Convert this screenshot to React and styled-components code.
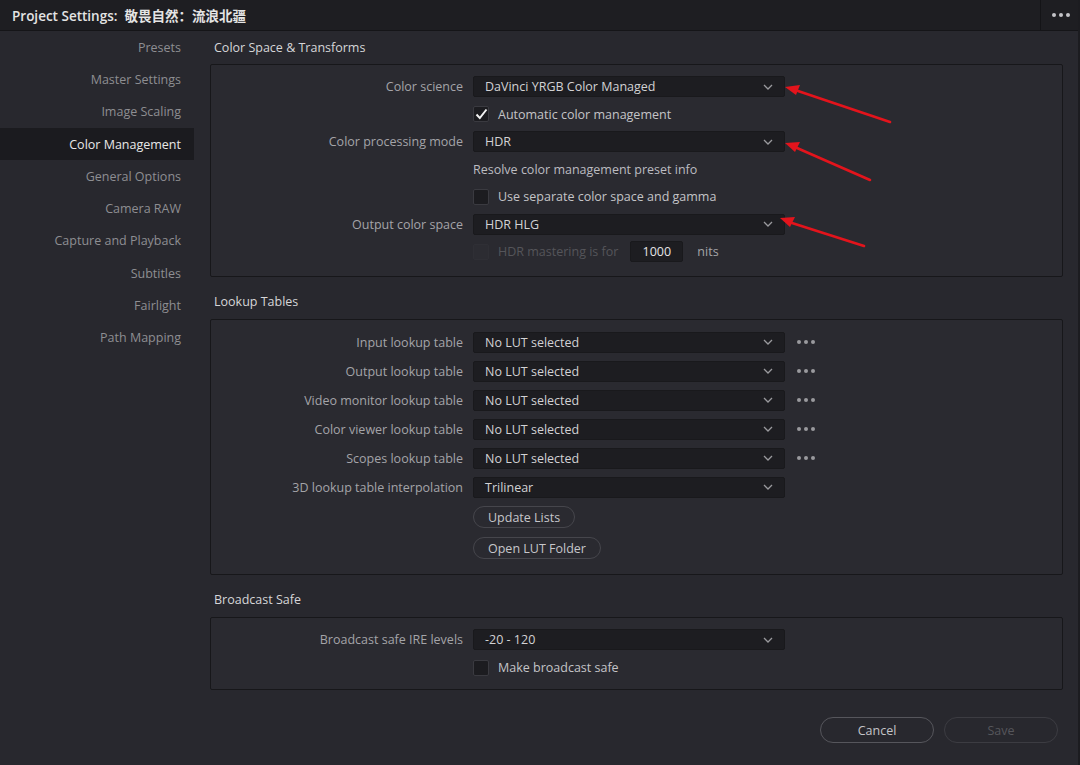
import React from 'react';
import styled, { createGlobalStyle } from 'styled-components';

const GlobalStyle = createGlobalStyle`
  html, body {
    margin: 0;
    padding: 0;
    background: #28282e;
  }
  * {
    box-sizing: border-box;
  }
`;

const sidebarItems = [
  'Presets',
  'Master Settings',
  'Image Scaling',
  'Color Management',
  'General Options',
  'Camera RAW',
  'Capture and Playback',
  'Subtitles',
  'Fairlight',
  'Path Mapping',
];

const lutRows = [
  'Input lookup table',
  'Output lookup table',
  'Video monitor lookup table',
  'Color viewer lookup table',
  'Scopes lookup table',
];

const Chevron = () => (
  <svg width="10" height="6" viewBox="0 0 10 6">
    <path d="M1 1 L5 5 L9 1" fill="none" stroke="#9a9a9e" strokeWidth="1.3" />
  </svg>
);

const Dropdown = ({ value }) => (
  <Select>
    <span>{value}</span>
    <Chevron />
  </Select>
);

const Check = ({ checked, disabled, children }) => (
  <CheckRow $disabled={disabled}>
    <Box $disabled={disabled}>
      {checked && (
        <svg width="13" height="12" viewBox="0 0 13 12">
          <path d="M1.5 6.5 L4.8 10 L11.5 1.5" fill="none" stroke="#f2f2f2" strokeWidth="2" />
        </svg>
      )}
    </Box>
    {children}
  </CheckRow>
);

const App = () => (
  <>
    <GlobalStyle />
    <Window>
      <TitleBar>
        <Title>Project Settings:  敬畏自然：流浪北疆</Title>
        <TitleMenu>
          <Dots $light>
            <i />
            <i />
            <i />
          </Dots>
        </TitleMenu>
      </TitleBar>
      <Body>
        <Sidebar>
          {sidebarItems.map((item) => (
            <NavItem key={item} $active={item === 'Color Management'}>
              {item}
            </NavItem>
          ))}
        </Sidebar>
        <Main>
          <Section>
            <Heading>Color Space &amp; Transforms</Heading>
            <Panel $pt={8} $pb={10}>
              <Grid $row={27.5}>
                <Label>Color science</Label>
                <Dropdown value="DaVinci YRGB Color Managed" />
                <span />
                <span />
                <Check checked>Automatic color management</Check>
                <span />
                <Label>Color processing mode</Label>
                <Dropdown value="HDR" />
                <span />
                <span />
                <Info>Resolve color management preset info</Info>
                <span />
                <span />
                <Check>Use separate color space and gamma</Check>
                <span />
                <Label>Output color space</Label>
                <Dropdown value="HDR HLG" />
                <span />
                <span />
                <MasteringRow>
                  <Check disabled>HDR mastering is for</Check>
                  <NumberBox>1000</NumberBox>
                  <Unit>nits</Unit>
                </MasteringRow>
                <span />
              </Grid>
            </Panel>
          </Section>

          <Section $spaced>
            <Heading>Lookup Tables</Heading>
            <Panel $pt={8} $pb={10}>
              <Grid $row={29}>
                {lutRows.map((label) => (
                  <React.Fragment key={label}>
                    <Label>{label}</Label>
                    <Dropdown value="No LUT selected" />
                    <Dots>
                      <i />
                      <i />
                      <i />
                    </Dots>
                  </React.Fragment>
                ))}
                <Label>3D lookup table interpolation</Label>
                <Dropdown value="Trilinear" />
                <span />
              </Grid>
              <Grid $row={31}>
                <span />
                <div>
                  <Pill>Update Lists</Pill>
                </div>
                <span />
                <span />
                <div>
                  <Pill>Open LUT Folder</Pill>
                </div>
                <span />
              </Grid>
            </Panel>
          </Section>

          <Section $spaced>
            <Heading>Broadcast Safe</Heading>
            <Panel $pt={8} $pb={7}>
              <Grid $row={28}>
                <Label>Broadcast safe IRE levels</Label>
                <Dropdown value="-20 - 120" />
                <span />
                <span />
                <Check>Make broadcast safe</Check>
                <span />
              </Grid>
            </Panel>
          </Section>

          <Footer>
            <FooterButton>Cancel</FooterButton>
            <FooterButton $disabled>Save</FooterButton>
          </Footer>
        </Main>
      </Body>

      <Annotations width="1080" height="765" viewBox="0 0 1080 765">
        <g stroke="#e3141c" strokeWidth="2.6" strokeLinecap="round">
          <line x1="798" y1="91" x2="890" y2="122" />
          <line x1="797" y1="148" x2="870" y2="180" />
          <line x1="792" y1="223" x2="864" y2="246" />
        </g>
        <g fill="#e3141c">
          <polygon points="785,87 800,85 796,95" />
          <polygon points="785,143 800,142 795,152" />
          <polygon points="780,218 795,217 790,227" />
        </g>
      </Annotations>
    </Window>
  </>
);

// Styled components
const Window = styled.div`
  position: relative;
  display: flex;
  flex-direction: column;
  width: 1080px;
  height: 765px;
  background: #28282e;
  font-family: 'Open Sans', 'Noto Sans', 'Noto Sans CJK SC', sans-serif;
  font-size: 12.5px;
  overflow: hidden;
  border-right: 2px solid #1c1c20;
`;

const TitleBar = styled.div`
  display: flex;
  align-items: stretch;
  height: 31px;
  background: #1e1e22;
  border-bottom: 1px solid #151518;
`;

const Title = styled.div`
  flex: 1;
  display: flex;
  align-items: center;
  padding-left: 12px;
  color: #e4e4e4;
  font-size: 13.5px;
  font-weight: 600;
  white-space: pre;
  font-family: 'Open Sans', 'Noto Sans CJK SC', sans-serif;
`;

const TitleMenu = styled.div`
  width: 38px;
  display: flex;
  align-items: center;
  justify-content: center;
  border-left: 1px solid #141417;
`;

const Dots = styled.div`
  display: flex;
  align-items: center;
  gap: 3px;
  padding-left: 2px;

  i {
    display: block;
    width: 4px;
    height: 4px;
    border-radius: 50%;
    background: ${(p) => (p.$light ? '#c4c4c8' : '#9a9a9e')};
  }
`;

const Body = styled.div`
  flex: 1;
  display: flex;
`;

const Sidebar = styled.nav`
  width: 194px;
  display: flex;
  flex-direction: column;
`;

const NavItem = styled.div`
  height: 32.3px;
  display: flex;
  align-items: center;
  justify-content: flex-end;
  padding-right: 13px;
  color: ${(p) => (p.$active ? '#e8e8e8' : '#8e8e92')};
  background: ${(p) => (p.$active ? '#1b1b1f' : 'transparent')};
`;

const Main = styled.main`
  flex: 1;
  display: flex;
  flex-direction: column;
  padding: 0 15px 0 16px;
`;

const Section = styled.section`
  margin-top: ${(p) => (p.$spaced ? '9px' : '0')};
`;

const Heading = styled.h3`
  margin: 0;
  height: 33px;
  padding: 0 0 1px 4px;
  display: flex;
  align-items: center;
  font-size: 12.5px;
  font-weight: 400;
  color: #d6d6d8;
`;

const Panel = styled.div`
  border: 1px solid #17171a;
  border-radius: 2px;
  background: #2a2a30;
  padding-top: ${(p) => p.$pt}px;
  padding-bottom: ${(p) => p.$pb}px;
`;

const Grid = styled.div`
  display: grid;
  grid-template-columns: 252px 312px 1fr;
  grid-auto-rows: ${(p) => p.$row}px;
  column-gap: 10px;
  align-items: center;
`;

const Label = styled.div`
  text-align: right;
  color: #a4a4a8;
  white-space: nowrap;
`;

const Select = styled.div`
  height: 21px;
  display: flex;
  align-items: center;
  justify-content: space-between;
  padding: 0 11px 0 11px;
  background: #1d1d21;
  border: 1px solid #19191c;
  border-radius: 2px;
  color: #d2d2d4;
`;

const CheckRow = styled.label`
  display: flex;
  align-items: center;
  gap: 9px;
  color: ${(p) => (p.$disabled ? '#55555a' : '#c4c4c7')};
  white-space: nowrap;
`;

const Box = styled.span`
  width: 16px;
  height: 16px;
  display: flex;
  align-items: center;
  justify-content: center;
  border-radius: 2px;
  background: ${(p) => (p.$disabled ? '#2c2c32' : '#1c1c20')};
  border: 1px solid ${(p) => (p.$disabled ? '#2f2f35' : '#3a3a40')};
`;

const Info = styled.div`
  color: #bcbcc0;
  white-space: nowrap;
`;

const MasteringRow = styled.div`
  display: flex;
  align-items: center;
`;

const NumberBox = styled.div`
  width: 53px;
  height: 21px;
  margin-left: 12px;
  display: flex;
  align-items: center;
  justify-content: center;
  background: #1d1d21;
  border: 1px solid #19191c;
  border-radius: 2px;
  color: #e4e4e6;
`;

const Unit = styled.span`
  margin-left: 14px;
  color: #a4a4a8;
`;

const Pill = styled.button`
  height: 22px;
  padding: 0 14px;
  border: 1px solid #46464c;
  border-radius: 11px;
  background: transparent;
  color: #c6c6ca;
  font-family: inherit;
  font-size: 12.5px;
`;

const Footer = styled.div`
  margin-top: auto;
  display: flex;
  justify-content: flex-end;
  gap: 10px;
  padding: 0 5px 22px 0;
`;

const FooterButton = styled.button`
  width: 114px;
  height: 26px;
  border-radius: 13px;
  background: transparent;
  border: 1px solid ${(p) => (p.$disabled ? '#3c3c42' : '#56565c')};
  color: ${(p) => (p.$disabled ? '#56565b' : '#c4c4c8')};
  font-family: inherit;
  font-size: 12.5px;
`;

const Annotations = styled.svg`
  position: absolute;
  top: 0;
  left: 0;
  pointer-events: none;
`;

export default App;
